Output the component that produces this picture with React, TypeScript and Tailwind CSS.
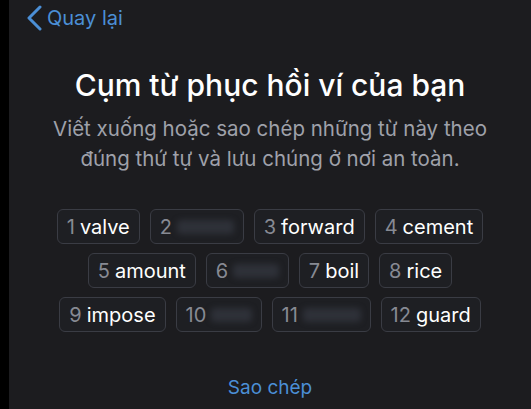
import { ReactNode } from 'react'

// ── Data ───────────────────────────────────────────────────────────────────────

type Word = { n: number; word?: string; width?: string }

const ROWS: Word[][] = [
  [
    { n: 1, word: 'valve' },
    { n: 2, width: 'w-[94px]' },
    { n: 3, word: 'forward' },
    { n: 4, word: 'cement' },
  ],
  [
    { n: 5, word: 'amount' },
    { n: 6, width: 'w-[83px]' },
    { n: 7, word: 'boil' },
    { n: 8, word: 'rice' },
  ],
  [
    { n: 9, word: 'impose' },
    { n: 10, width: 'w-[86px]' },
    { n: 11, width: 'w-[99px]' },
    { n: 12, word: 'guard' },
  ],
]

// ── Pieces ─────────────────────────────────────────────────────────────────────

function Chip({ n, word, width }: Word) {
  return (
    <div
      className={[
        'h-[35px] flex items-center gap-[5px] px-[9px] rounded-[6px]',
        'border border-[#3a3c44] bg-[#1e1f23] text-[20px] leading-none overflow-hidden',
        width ?? '',
      ].join(' ')}
    >
      <span className="text-[#878a93]">{n}</span>
      {word ? (
        <span className="text-white">{word}</span>
      ) : (
        // the word itself is hidden behind a smudge in the screenshot
        <span className="flex-1 h-[14px] rounded-sm bg-[#3a3e48] opacity-60 blur-[3px]" />
      )}
    </div>
  )
}

function Row({ children }: { children: ReactNode }) {
  return <div className="flex justify-center gap-[10px]">{children}</div>
}

// ── Page ───────────────────────────────────────────────────────────────────────

export default function App() {
  return (
    <div
      className="w-[531px] h-[409px] flex bg-black overflow-hidden"
      style={{ fontFamily: 'Inter, "Noto Sans", sans-serif' }}
    >
      <div className="w-[9px] shrink-0 bg-black" />

      <div className="flex-1 flex flex-col bg-[#1c1c1f]">
        {/* Back */}
        <div className="h-[36px] flex items-center pl-[17px] text-[#4b8fd6]">
          <svg width="16" height="26" viewBox="0 0 16 26" fill="none">
            <path
              d="M14 2 L3 13 L14 24"
              stroke="currentColor"
              strokeWidth="3"
              strokeLinecap="round"
              strokeLinejoin="round"
            />
          </svg>
          <span className="ml-[5px] text-[20px]">Quay lại</span>
        </div>

        {/* Heading */}
        <h1 className="mt-[31px] text-center text-white text-[30px] font-medium leading-[36px]">
          Cụm từ phục hồi ví của bạn
        </h1>
        <p className="mt-[11px] text-center text-[#9fa1aa] text-[20.5px] leading-[30px]">
          Viết xuống hoặc sao chép những từ này theo
          <br />
          đúng thứ tự và lưu chúng ở nơi an toàn.
        </p>

        {/* Phrase */}
        <div className="mt-[35px] flex flex-col gap-[9px]">
          {ROWS.map((row, i) => (
            <Row key={i}>
              {row.map((w) => (
                <Chip key={w.n} {...w} />
              ))}
            </Row>
          ))}
        </div>

        <div className="mt-[42px] text-center text-[#4b8fd6] text-[19px]">Sao chép</div>
      </div>
    </div>
  )
}
